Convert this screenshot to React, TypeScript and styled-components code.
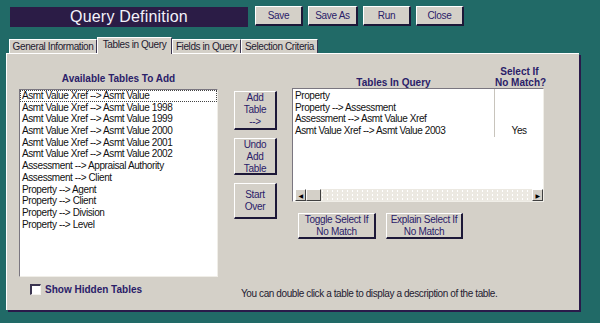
import styled, { createGlobalStyle } from 'styled-components';

const Global = createGlobalStyle`
  html, body { margin: 0; padding: 0; }
  body { background: #216a67; }
`;

const Page = styled.div`
  width: 600px;
  height: 323px;
  overflow: hidden;
  background: #216a67;
  font-family: Tahoma, "Liberation Sans", "DejaVu Sans", sans-serif;
  letter-spacing: -0.4px;
  padding: 6px 0 0 6px;
  box-sizing: border-box;
`;

const TopBar = styled.div`
  display: flex;
  align-items: flex-start;
  gap: 5px;
  padding-left: 4px;
`;

const Title = styled.div`
  width: 238px;
  height: 20px;
  margin-top: 1px;
  margin-right: 2px;
  background: #2b1c46;
  color: #f4f2fa;
  font-size: 16px;
  line-height: 20px;
  text-align: center;
  letter-spacing: 0.2px;
`;

const Bevel = styled.button<{ $w: number; $h: number }>`
  width: ${(p) => p.$w}px;
  height: ${(p) => p.$h}px;
  padding: 0;
  background: #d4d0c8;
  color: #2a2068;
  font-family: inherit;
  font-size: 10px;
  letter-spacing: -0.3px;
  line-height: 12px;
  border-top: 1px solid #ffffff;
  border-left: 1px solid #ffffff;
  border-right: 2px solid #1d1838;
  border-bottom: 2px solid #1d1838;
  box-sizing: border-box;
  text-align: center;
  white-space: nowrap;
`;

const Tabs = styled.div`
  display: flex;
  align-items: flex-end;
  height: 16px;
  margin-top: 10px;
  padding-left: 3px;
`;

const Tab = styled.div<{ $w: number; $active?: boolean }>`
  width: ${(p) => p.$w}px;
  height: ${(p) => (p.$active ? 17 : 14)}px;
  margin-bottom: ${(p) => (p.$active ? -1 : 0)}px;
  box-sizing: border-box;
  background: #d4d0c8;
  border-top: 1px solid #ffffff;
  border-left: 1px solid #ffffff;
  border-right: 1px solid #3a3450;
  color: #1e1a30;
  font-size: 10px;
  line-height: ${(p) => (p.$active ? 14 : 13)}px;
  text-align: center;
  white-space: nowrap;
  overflow: hidden;
  position: relative;
  z-index: ${(p) => (p.$active ? 1 : 0)};
`;

const Panel = styled.div`
  width: 573px;
  height: 257px;
  box-sizing: border-box;
  background: #d4d0c8;
  border-top: 1px solid #ffffff;
  border-left: 1px solid #ffffff;
  box-shadow: 2px 2px 0 #2a1a4a;
  display: grid;
  grid-template-columns: 199px 16px 43px 15px 252px;
  grid-template-rows: 229px auto;
  padding-left: 12px;
`;

const LeftCol = styled.div`
  grid-column: 1;
  display: flex;
  flex-direction: column;
`;

const Heading = styled.div`
  color: #2a2068;
  font-size: 10px;
  font-weight: bold;
  letter-spacing: 0;
  line-height: 11px;
  text-align: center;
  white-space: nowrap;
`;

const ListBox = styled.div<{ $h: number }>`
  height: ${(p) => p.$h}px;
  background: #ffffff;
  box-sizing: border-box;
  border-top: 1px solid #7a7680;
  border-left: 1px solid #7a7680;
  border-right: 1px solid #f0eee8;
  border-bottom: 1px solid #f0eee8;
  position: relative;
  overflow: hidden;
`;

const Item = styled.div<{ $focus?: boolean }>`
  height: 11.7px;
  line-height: 11.7px;
  font-size: 10px;
  color: #111111;
  padding-left: 2px;
  white-space: nowrap;
  box-sizing: border-box;
  outline: ${(p) => (p.$focus ? '1px dotted #444' : 'none')};
  outline-offset: -1px;
`;

const MidCol = styled.div`
  grid-column: 3;
  display: flex;
  flex-direction: column;
  gap: 8px;
  padding-top: 37px;
`;

const RightCol = styled.div`
  grid-column: 5;
  display: flex;
  flex-direction: column;
  padding-top: 12px;
`;

const RightHead = styled.div`
  display: flex;
  align-items: flex-end;
  height: 22px;
`;

const HeadCell = styled(Heading)<{ $w: number }>`
  width: ${(p) => p.$w}px;
`;

const Rows = styled.div`
  display: flex;
  height: 101px;
`;

const ColA = styled.div`
  width: 202px;
  padding-top: 1px;
`;

const ColB = styled.div`
  width: 48px;
  height: 47px;
  border-left: 1px solid #c8c4bc;
  padding-top: 1px;
  text-align: center;
`;

const HScroll = styled.div`
  position: absolute;
  left: 2px;
  right: 0;
  bottom: 0;
  height: 12px;
  display: flex;
  background-color: #ece9e2;
  background-image: radial-gradient(#ffffff 0.7px, transparent 0.8px);
  background-size: 5px 4px;
`;

const Arrow = styled.div<{ $w?: number }>`
  width: ${(p) => p.$w ?? 11}px;
  height: 12px;
  box-sizing: border-box;
  background: #d4d0c8;
  border-top: 1px solid #ffffff;
  border-left: 1px solid #ffffff;
  border-right: 1px solid #404040;
  border-bottom: 1px solid #404040;
  display: flex;
  align-items: center;
  justify-content: center;
  font-size: 6px;
  color: #000;
`;

const Spacer = styled.div`
  flex: 1;
`;

const ToggleRow = styled.div`
  display: flex;
  gap: 10px;
  margin-top: 11px;
  padding-left: 6px;
`;

const CheckRow = styled.div`
  grid-column: 1;
  display: flex;
  align-items: center;
  gap: 4px;
  padding: 1px 0 0 11px;
  height: 11px;
`;

const CheckBox = styled.div`
  width: 11px;
  height: 11px;
  box-sizing: border-box;
  background: #ffffff;
  border-top: 2px solid #3a3450;
  border-left: 2px solid #3a3450;
  border-right: 1px solid #f4f2ee;
  border-bottom: 1px solid #f4f2ee;
`;

const CheckLabel = styled.span`
  color: #2a2068;
  font-size: 10px;
  font-weight: bold;
  letter-spacing: 0;
`;

const Footnote = styled.div`
  grid-column: 2 / span 4;
  padding: 5px 0 0 23px;
  font-size: 10px;
  color: #1e1a30;
  white-space: nowrap;
`;

const available = [
  'Asmt Value Xref --> Asmt Value',
  'Asmt Value Xref --> Asmt Value 1998',
  'Asmt Value Xref --> Asmt Value 1999',
  'Asmt Value Xref --> Asmt Value 2000',
  'Asmt Value Xref --> Asmt Value 2001',
  'Asmt Value Xref --> Asmt Value 2002',
  'Assessment --> Appraisal Authority',
  'Assessment --> Client',
  'Property --> Agent',
  'Property --> Client',
  'Property --> Division',
  'Property --> Level',
];

const inQuery = [
  'Property',
  'Property --> Assessment',
  'Assessment --> Asmt Value Xref',
  'Asmt Value Xref --> Asmt Value 2003',
];

const App = () => (
  <Page>
    <Global />
    <TopBar>
      <Title>Query Definition</Title>
      <Bevel $w={48} $h={20}>Save</Bevel>
      <Bevel $w={50} $h={20}>Save As</Bevel>
      <Bevel $w={48} $h={20}>Run</Bevel>
      <Bevel $w={48} $h={20}>Close</Bevel>
    </TopBar>
    <Tabs>
      <Tab $w={88}>General Information</Tab>
      <Tab $w={75} $active>Tables in Query</Tab>
      <Tab $w={69}>Fields in Query</Tab>
      <Tab $w={77}>Selection Criteria</Tab>
    </Tabs>
    <Panel>
      <LeftCol>
        <Heading style={{ marginTop: 19, marginBottom: 5 }}>Available Tables To Add</Heading>
        <ListBox $h={188}>
          {available.map((t, i) => (
            <Item key={i} $focus={i === 0}>{t}</Item>
          ))}
        </ListBox>
      </LeftCol>
      <MidCol>
        <Bevel $w={43} $h={39}>Add<br />Table<br />--&gt;</Bevel>
        <Bevel $w={43} $h={37}>Undo<br />Add<br />Table</Bevel>
        <Bevel $w={43} $h={36}>Start<br />Over</Bevel>
      </MidCol>
      <RightCol>
        <RightHead>
          <HeadCell $w={203}>Tables In Query</HeadCell>
          <HeadCell $w={49}>Select If<br />No Match?</HeadCell>
        </RightHead>
        <ListBox $h={114}>
          <Rows>
            <ColA>
              {inQuery.map((t, i) => (
                <Item key={i}>{t}</Item>
              ))}
            </ColA>
            <ColB>
              <Item />
              <Item />
              <Item />
              <Item style={{ paddingLeft: 0 }}>Yes</Item>
            </ColB>
          </Rows>
          <HScroll>
            <Arrow>◀</Arrow>
            <Arrow $w={15} />
            <Spacer />
            <Arrow>▶</Arrow>
          </HScroll>
        </ListBox>
        <ToggleRow>
          <Bevel $w={78} $h={26}>Toggle Select If<br />No Match</Bevel>
          <Bevel $w={77} $h={26}>Explain Select If<br />No Match</Bevel>
        </ToggleRow>
      </RightCol>
      <CheckRow>
        <CheckBox />
        <CheckLabel>Show Hidden Tables</CheckLabel>
      </CheckRow>
      <Footnote>You can double click a table to display a description of the table.</Footnote>
    </Panel>
  </Page>
);

export default App;
